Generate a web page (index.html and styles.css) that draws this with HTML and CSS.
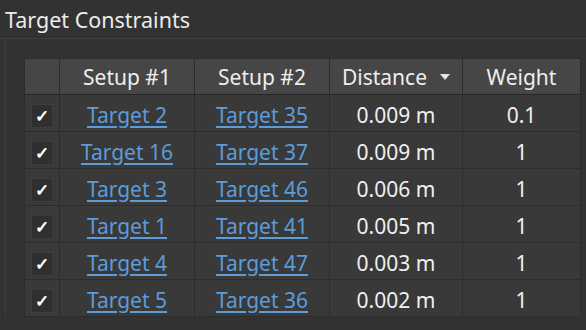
FILE: index.html
```html
<!DOCTYPE html>
<html lang="en">
<head>
  <meta charset="UTF-8" />
  <title>Target Constraints</title>
  <link rel="stylesheet" href="styles.css">
</head>
<body>
  <h2 class="title">Target Constraints</h2>

  <section class="panel">
    <table class="grid">
      <colgroup>
        <col class="c-check">
        <col class="c-setup">
        <col class="c-setup">
        <col class="c-dist">
        <col class="c-weight">
      </colgroup>
      <thead>
        <tr>
          <th></th>
          <th>Setup #1</th>
          <th>Setup #2</th>
          <th>Distance<span class="sort-arrow"></span></th>
          <th>Weight</th>
        </tr>
      </thead>
      <tbody>
        <tr>
          <td class="check"><span class="box">✓</span></td>
          <td><a href="#">Target 2</a></td>
          <td><a href="#">Target 35</a></td>
          <td>0.009 m</td>
          <td>0.1</td>
        </tr>
        <tr>
          <td class="check"><span class="box">✓</span></td>
          <td><a href="#">Target 16</a></td>
          <td><a href="#">Target 37</a></td>
          <td>0.009 m</td>
          <td>1</td>
        </tr>
        <tr>
          <td class="check"><span class="box">✓</span></td>
          <td><a href="#">Target 3</a></td>
          <td><a href="#">Target 46</a></td>
          <td>0.006 m</td>
          <td>1</td>
        </tr>
        <tr>
          <td class="check"><span class="box">✓</span></td>
          <td><a href="#">Target 1</a></td>
          <td><a href="#">Target 41</a></td>
          <td>0.005 m</td>
          <td>1</td>
        </tr>
        <tr>
          <td class="check"><span class="box">✓</span></td>
          <td><a href="#">Target 4</a></td>
          <td><a href="#">Target 47</a></td>
          <td>0.003 m</td>
          <td>1</td>
        </tr>
        <tr>
          <td class="check"><span class="box">✓</span></td>
          <td><a href="#">Target 5</a></td>
          <td><a href="#">Target 36</a></td>
          <td>0.002 m</td>
          <td>1</td>
        </tr>
      </tbody>
    </table>
  </section>
</body>
</html>
```

FILE: styles.css
```css
body {
  margin: 0;
  height: 330px;
  background: #323232;
  color: #e6e6e6;
  font-family: "Noto Sans", "Open Sans", sans-serif;
  overflow: hidden;
}

.title {
  margin: 0;
  height: 39px;
  padding: 7px 0 0 5px;
  box-sizing: border-box;
  font-size: 21.5px;
  font-weight: normal;
  line-height: 26px;
  color: #ececec;
  border-bottom: 1px solid #3f3f3f;
}

.panel {
  margin-left: 5px;
  padding: 19px 0 0 18px;
  border-left: 1px solid #3c3c3c;
}

.grid {
  border-collapse: collapse;
  width: 556px;
  font-size: 21px;
  table-layout: fixed;
}

.c-check { width: 35px; }
.c-setup { width: 135px; }
.c-dist { width: 133px; }
.c-weight { width: 118px; }

.grid th {
  height: 35px;
  padding: 0;
  background: #464646;
  font-weight: normal;
  color: #eeeeee;
  border: 1px solid #2c2c2c;
  border-bottom-color: #262626;
}

.grid td {
  height: 33px;
  padding: 3px 0 0;
  text-align: center;
  background: #393939;
  border: 1px solid #2d2d2d;
  color: #f0f0f0;
  line-height: 24px;
}

.grid a {
  color: #5c9cd9;
  text-decoration: underline;
  text-underline-offset: 3px;
}

/* sort indicator next to the header label */
.sort-arrow {
  display: inline-block;
  margin-left: 13px;
  vertical-align: 5px;
  border-left: 5px solid transparent;
  border-right: 5px solid transparent;
  border-top: 6px solid #e4e4e4;
}

.box {
  display: inline-block;
  width: 20px;
  height: 22px;
  line-height: 22px;
  background: #2f2f2f;
  border: 1px dotted #4a4a4a;
  color: #ffffff;
  font-size: 17px;
  font-weight: bold;
  vertical-align: middle;
}
```
